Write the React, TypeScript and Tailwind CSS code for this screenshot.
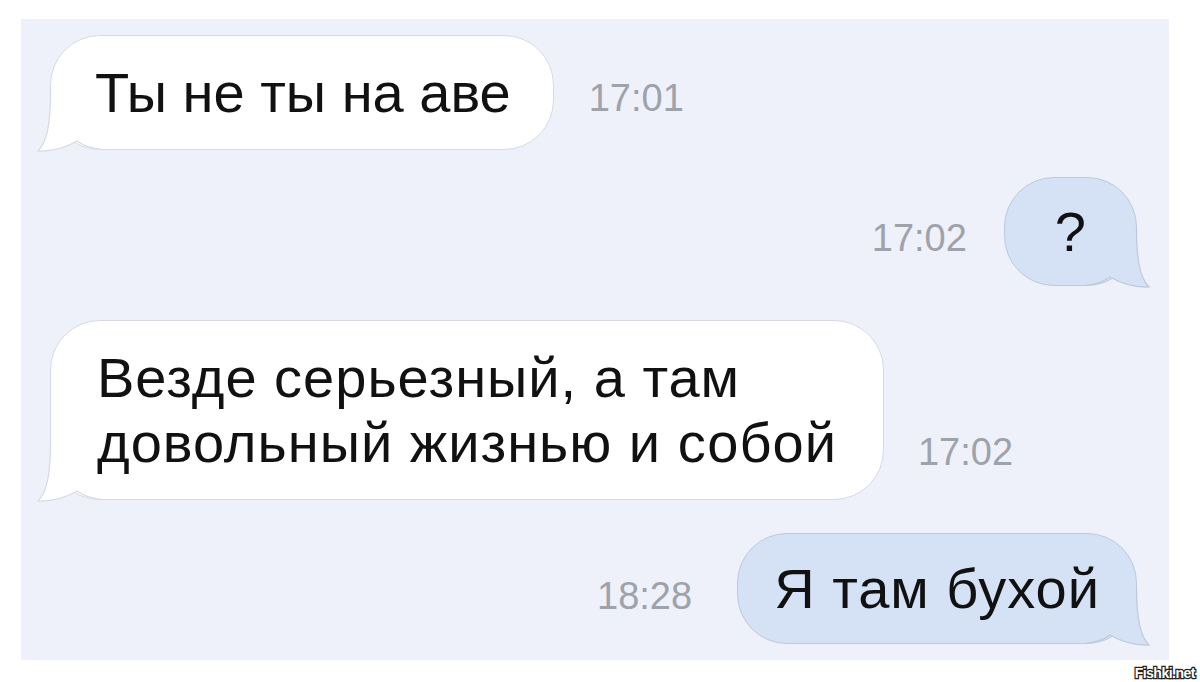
import type { ReactNode } from "react";

type Side = "in" | "out";

const FONT = "font-['Liberation_Sans',Arial,sans-serif]";

function Tail({ side }: { side: Side }) {
  const fill = side === "in" ? "#ffffff" : "#d5e2f6";
  const stroke = side === "in" ? "#d6dae2" : "#bccadc";
  return (
    <svg
      width="66"
      height="60"
      viewBox="-14 -58 66 60"
      className={`pointer-events-none absolute bottom-[-3px] ${
        side === "in" ? "left-[-15px]" : "right-[-15px] -scale-x-100"
      }`}
    >
      <path
        d="M0.5,-58 C0.5,-26 -3,-8 -12,1 C2,1.5 15,-2 27,-9 C34,-4 41,-1.5 52,-0.5 L52,-58 Z"
        fill={fill}
      />
      <path
        d="M0.5,-58 C0.5,-26 -3,-8 -12,1 C2,1.5 15,-2 27,-9 C34,-4 41,-1.5 52,-0.5"
        fill="none"
        stroke={stroke}
        strokeWidth="1.2"
      />
    </svg>
  );
}

function Bubble({
  side,
  className = "",
  children,
}: {
  side: Side;
  className?: string;
  children: ReactNode;
}) {
  return (
    <div
      className={`relative rounded-[50px] border text-[56px] leading-[65px] text-[#111111] ${
        side === "in"
          ? "border-[#d6dae2] bg-white"
          : "border-[#bccadc] bg-[#d5e2f6]"
      } ${className}`}
    >
      <span className="relative z-10">{children}</span>
      <Tail side={side} />
    </div>
  );
}

function Time({ children, className = "" }: { children: ReactNode; className?: string }) {
  return (
    <span className={`mb-[29px] text-[38px] leading-none text-[#9ea2aa] ${className}`}>
      {children}
    </span>
  );
}

export default function App() {
  return (
    <div className={`relative h-[682px] w-[1200px] overflow-hidden bg-white ${FONT}`}>
      <div className="ml-[21px] mt-[19px] flex h-[641px] w-[1148px] flex-col bg-[#eef1f9] pl-[29px] pr-[32px] pt-[16px]">
        <div className="flex items-end">
          <Bubble side="in" className="pl-[44px] pr-[42px] py-6 tracking-[0px]">
            Ты не ты на аве
          </Bubble>
          <Time className="ml-[35px] mb-[33px]">17:01</Time>
        </div>

        <div className="mt-[27px] flex items-end justify-end">
          <Time className="mr-[37px]">17:02</Time>
          <Bubble side="out" className="px-[50px] py-[21px]">
            ?
          </Bubble>
        </div>

        <div className="mt-[34px] flex items-end">
          <Bubble side="in" className="rounded-[48px] px-[46px] py-6 tracking-[1px]">
            Везде серьезный, а там
            <br />
            довольный жизнью и собой
          </Bubble>
          <Time className="ml-[34px]">17:02</Time>
        </div>

        <div className="mt-[33px] flex items-end justify-end">
          <Time className="mr-[45px]">18:28</Time>
          <Bubble side="out" className="px-[36px] py-[22px] tracking-[1px]">
            Я там бухой
          </Bubble>
        </div>
      </div>

      <span className="absolute bottom-[2px] right-[5px] text-[14px] font-bold leading-none tracking-[-0.5px] text-white [-webkit-text-stroke:2.5px_#222] [paint-order:stroke_fill]">
        Fishki.net
      </span>
    </div>
  );
}
